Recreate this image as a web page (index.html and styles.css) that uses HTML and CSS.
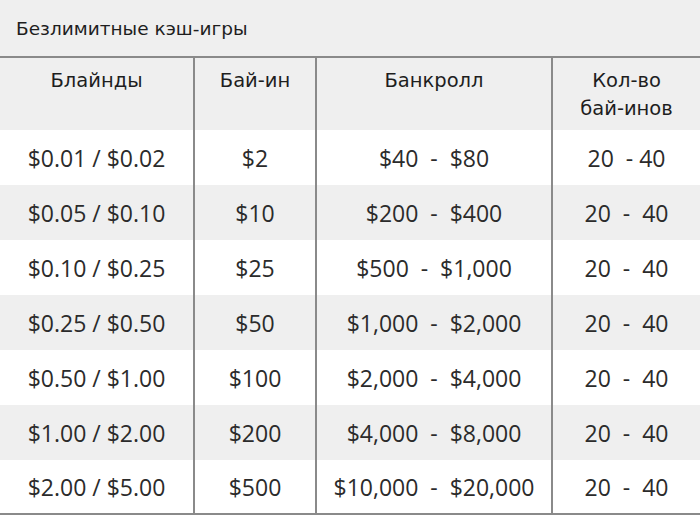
FILE: index.html
```html
<!DOCTYPE html>
<html lang="ru">
<head>
<meta charset="utf-8">
<link rel="stylesheet" href="styles.css">
</head>
<body>
<div class="wrap">
  <div class="title">Безлимитные кэш-игры</div>
  <table class="grid">
    <colgroup>
      <col class="c1"><col class="c2"><col class="c3"><col class="c4">
    </colgroup>
    <thead>
      <tr>
        <th>Блайнды</th>
        <th>Бай-ин</th>
        <th>Банкролл</th>
        <th>Кол-во<br>бай-инов</th>
      </tr>
    </thead>
    <tbody>
      <tr><td>$0.01 / $0.02</td><td>$2</td><td>$40&nbsp; -&nbsp; $80</td><td>20&nbsp; - 40</td></tr>
      <tr><td>$0.05 / $0.10</td><td>$10</td><td>$200&nbsp; -&nbsp; $400</td><td>20&nbsp; -&nbsp; 40</td></tr>
      <tr><td>$0.10 / $0.25</td><td>$25</td><td>$500&nbsp; -&nbsp; $1,000</td><td>20&nbsp; -&nbsp; 40</td></tr>
      <tr><td>$0.25 / $0.50</td><td>$50</td><td>$1,000&nbsp; -&nbsp; $2,000</td><td>20&nbsp; -&nbsp; 40</td></tr>
      <tr><td>$0.50 / $1.00</td><td>$100</td><td>$2,000&nbsp; -&nbsp; $4,000</td><td>20&nbsp; -&nbsp; 40</td></tr>
      <tr><td>$1.00 / $2.00</td><td>$200</td><td>$4,000&nbsp; -&nbsp; $8,000</td><td>20&nbsp; -&nbsp; 40</td></tr>
      <tr><td>$2.00 / $5.00</td><td>$500</td><td>$10,000&nbsp; -&nbsp; $20,000</td><td>20&nbsp; -&nbsp; 40</td></tr>
    </tbody>
  </table>
</div>
</body>
</html>
```
FILE: styles.css
```css
html, body {
  margin: 0;
  padding: 0;
  background: #ffffff;
}
.wrap {
  width: 700px;
  height: 515px;
  overflow: hidden;
}
.title {
  height: 58px;
  box-sizing: border-box;
  padding: 18px 0 0 16px;
  background: #efefef;
  border-bottom: 2px solid #8a8a8a;
  font-family: "DejaVu Sans", sans-serif;
  font-size: 18.5px;
  color: #1e1e1e;
}
.grid {
  width: 700px;
  border-collapse: collapse;
  table-layout: fixed;
}
.c1 { width: 194px; }
.c2 { width: 122px; }
.c3 { width: 236px; }
.c4 { width: 148px; }
.grid th {
  height: 72px;
  box-sizing: border-box;
  padding: 9px 0 0 0;
  vertical-align: top;
  background: #efefef;
  font-family: "DejaVu Sans", sans-serif;
  font-weight: normal;
  font-size: 19.5px;
  line-height: 28px;
  color: #1e1e1e;
  border-left: 2px solid #8a8a8a;
}
.grid td {
  height: 55px;
  box-sizing: border-box;
  padding: 0;
  text-align: center;
  vertical-align: middle;
  font-family: "Open Sans", sans-serif;
  font-size: 23px;
  color: #2b2b2b;
  border-left: 2px solid #8a8a8a;
}
.grid th:first-child,
.grid td:first-child {
  border-left: none;
}
.grid tbody tr:nth-child(even) td {
  background: #efefef;
}
.grid tbody tr:last-child td {
  height: 54px;
  border-bottom: 2px solid #8a8a8a;
}
```
